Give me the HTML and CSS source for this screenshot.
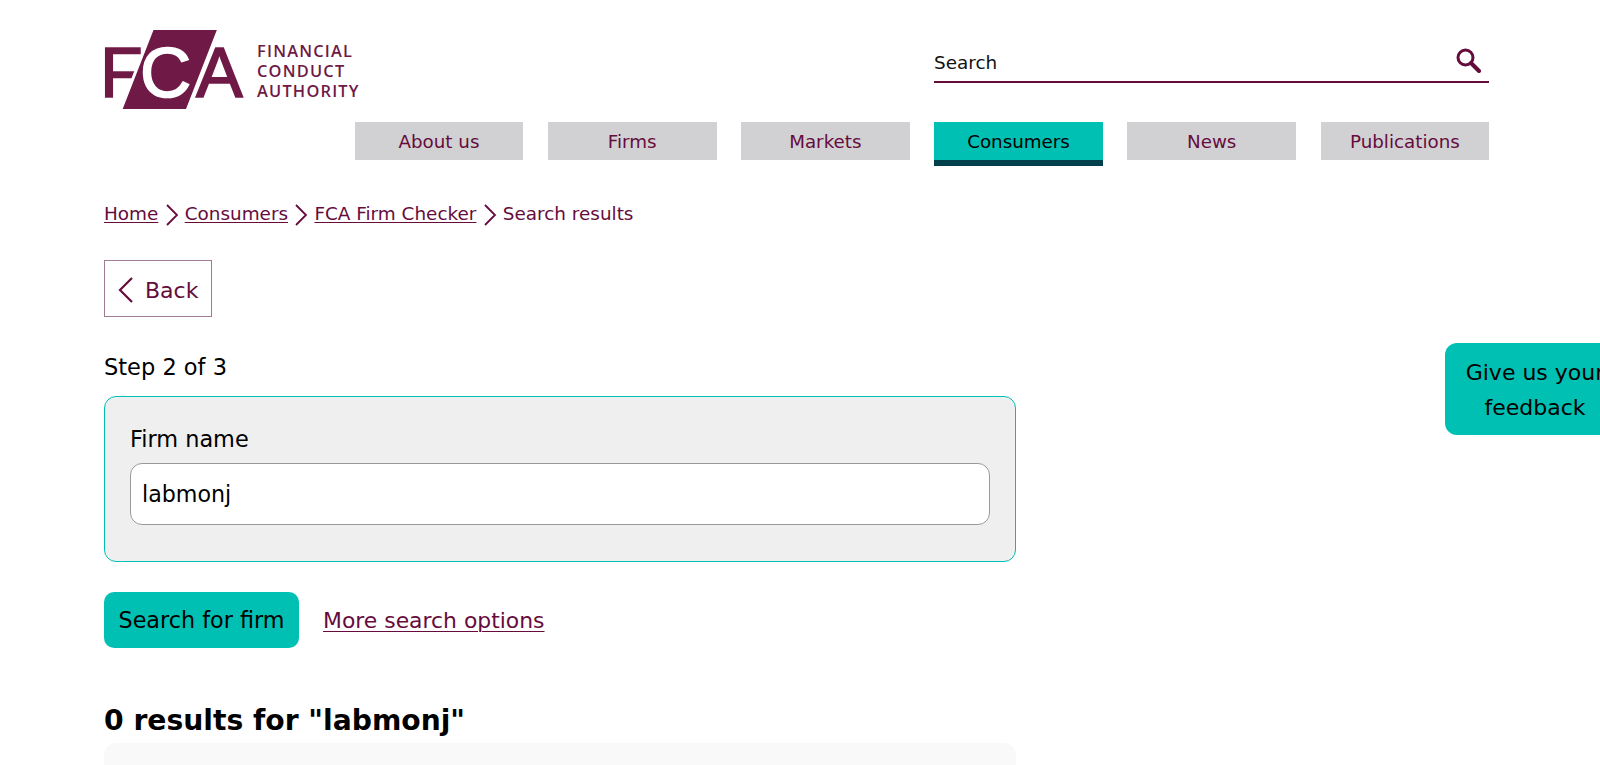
FILE: index.html
```html
<!DOCTYPE html>
<html lang="en">
<head>
<meta charset="utf-8">
<title>FCA Firm Checker - Search results</title>
<link rel="stylesheet" href="styles.css">
</head>
<body>
<div class="page">
  <header class="top">
    <div class="brand">
      <svg class="logo" width="142" height="81" viewBox="0 0 142 81" aria-label="FCA">
        <text class="logo-f" x="-4" y="67.5">F</text>
        <text class="logo-a" x="92" y="67.5">A</text>
        <path class="logo-para" d="M48.5 -0.5H115L83 81.5H16.5Z"/>
        <text class="logo-c" x="36" y="67.5">C</text>
      </svg>
      <div class="brand-text"><span>FINANCIAL</span><span>CONDUCT</span><span>AUTHORITY</span></div>
    </div>
    <form class="site-search">
      <span class="site-search-label">Search</span>
      <svg class="search-icon" width="26" height="26" viewBox="0 0 26 26" aria-hidden="true">
        <circle cx="10.5" cy="10.5" r="7.5" fill="none" stroke="#660c3c" stroke-width="3"/>
        <path d="M16 16l8 8" stroke="#660c3c" stroke-width="4" stroke-linecap="round"/>
      </svg>
    </form>
  </header>
  <nav class="main-nav">
    <a class="nav-item">About us</a>
    <a class="nav-item">Firms</a>
    <a class="nav-item">Markets</a>
    <a class="nav-item active">Consumers</a>
    <a class="nav-item">News</a>
    <a class="nav-item">Publications</a>
  </nav>
  <nav class="crumbs">
    <a>Home</a>
    <svg class="crumb-sep" width="14" height="22" viewBox="0 0 14 22"><path d="M2 1l10 10L2 21"/></svg>
    <a>Consumers</a>
    <svg class="crumb-sep" width="14" height="22" viewBox="0 0 14 22"><path d="M2 1l10 10L2 21"/></svg>
    <a>FCA Firm Checker</a>
    <svg class="crumb-sep" width="14" height="22" viewBox="0 0 14 22"><path d="M2 1l10 10L2 21"/></svg>
    <span>Search results</span>
  </nav>
  <a class="back">
    <svg width="16" height="26" viewBox="0 0 16 26"><path d="M14 1L2 13l12 12"/></svg>
    <span>Back</span>
  </a>
  <p class="step">Step 2 of 3</p>
  <div class="search-box">
    <label class="field-label">Firm name</label>
    <div class="field-input">labmonj</div>
  </div>
  <div class="actions">
    <button class="primary" type="button">Search for firm</button>
    <a class="more">More search options</a>
  </div>
  <h2 class="results-title">0 results for "labmonj"</h2>
  <div class="results-panel"></div>
</div>
<a class="feedback">Give us your feedback</a>
</body>
</html>
```
FILE: styles.css
```css
* { box-sizing: border-box; }
html, body { margin: 0; height: 765px; overflow: hidden; background: #fff; }
body { font-family: "DejaVu Sans", Verdana, sans-serif; color: #000; position: relative; }
.page { padding: 29px 111px 0 104px; }

.top { display: flex; justify-content: space-between; height: 81px; }
.brand { display: flex; gap: 11px; }
.logo { display: block; overflow: visible; }
.logo text { font-family: "Liberation Sans", Arial, sans-serif; font-size: 70px; }
.logo-f, .logo-a { fill: #6f1946; stroke: #6f1946; stroke-width: 1.6px; }
.logo-para { fill: #6f1946; stroke: #fff; stroke-width: 3px; }
.logo .logo-c { fill: #fff; stroke: #fff; stroke-width: 1.6px; font-size: 71px; }
.brand-text { display: flex; flex-direction: column; justify-content: center; font-family: "Open Sans", sans-serif; font-size: 16.4px; line-height: 19.7px; letter-spacing: 1.2px; color: #6f1946; font-weight: 600; padding-top: 3px; }
.site-search { width: 555px; height: 54px; border-bottom: 2px solid #660c3c; display: flex; justify-content: space-between; align-items: center; padding: 15px 8px 0 0; align-self: flex-start; }
.site-search-label { font-size: 18.4px; color: #111; }
.search-icon { margin-bottom: 6px; }

.main-nav { display: flex; justify-content: flex-end; gap: 24.4px; margin: 12px -0.3px 0 0; height: 44px; }
.nav-item { width: 168.8px; height: 38px; background: #d1d1d4; color: #660c3c; font-size: 18.3px; display: flex; align-items: center; justify-content: center; }
.nav-item.active { height: 44px; background: #00c0b3; color: #000; border-bottom: 6px solid #00404d; }

.crumbs { display: flex; align-items: center; gap: 6.2px; margin-top: 35px; height: 24px; font-size: 18.4px; color: #660c3c; }
.crumbs a { text-decoration: underline; text-underline-offset: 2px; }
.crumb-sep { fill: none; stroke: #660c3c; stroke-width: 1.8; margin-top: 3px; }

.back { display: flex; width: 108px; height: 57px; margin-top: 35px; padding-top: 3px; border: 1px solid #a17c90; align-items: center; gap: 11px; padding-left: 13px; color: #660c3c; font-size: 22px; }
.back svg { fill: none; stroke: #660c3c; stroke-width: 2.2; }

.step { margin: 36px 0 0; font-size: 22.5px; line-height: 28px; }

.search-box { width: 912px; height: 166px; margin-top: 15px; padding: 25px 25px 0; background: #efefef; border: 1px solid #00c0b3; border-radius: 12px; }
.field-label { display: block; font-size: 22.4px; line-height: 35px; }
.field-input { height: 62px; margin-top: 6px; padding-left: 11px; background: #fff; border: 1px solid #9a9a9a; border-radius: 12px; font-size: 22.2px; line-height: 60px; }

.actions { display: flex; align-items: center; gap: 24px; margin-top: 30px; }
.primary { width: 195px; height: 56px; padding: 0; border: 0; border-radius: 10px; background: #00c0b3; font: inherit; font-size: 22.3px; color: #000; }
.more { margin-top: 1px; color: #660c3c; font-size: 21.9px; text-decoration: underline; text-underline-offset: 3px; text-decoration-thickness: 1px; }

.results-title { margin: 53px 0 0; font-size: 28.2px; line-height: 40px; font-weight: 700; }
.results-panel { width: 912px; height: 60px; margin-top: 2px; background: #f9f9f9; border-radius: 12px; }

.feedback { position: absolute; top: 343px; left: 1445px; width: 180px; height: 92px; padding: 12px 0 0; background: #00c0b3; border-radius: 12px 0 0 12px; font-size: 22px; line-height: 35px; text-align: center; color: #000; }
```
